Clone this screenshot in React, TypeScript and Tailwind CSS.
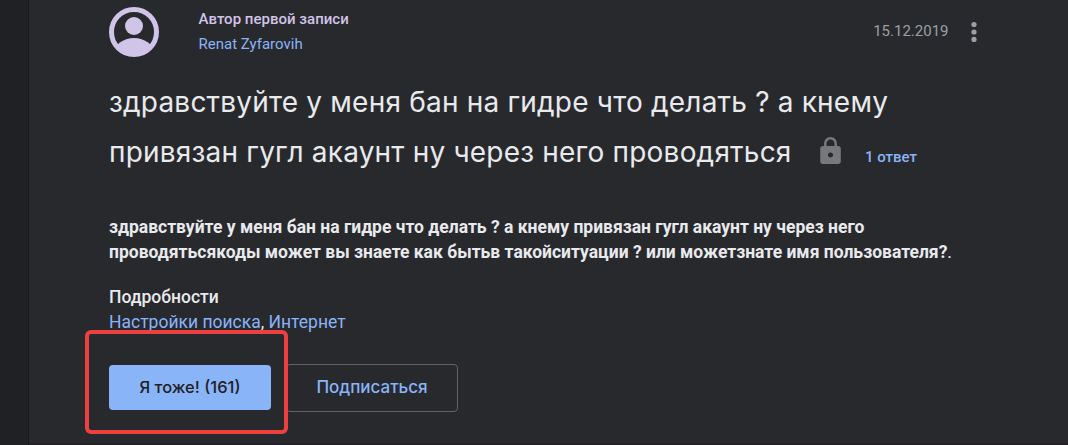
import type { ReactNode } from "react";

function Avatar() {
  return (
    <svg viewBox="0 0 50 50" className="size-[50px] shrink-0" aria-hidden="true">
      <defs>
        <clipPath id="avatar-clip">
          <circle cx="25" cy="25" r="24" />
        </clipPath>
      </defs>
      <circle cx="25" cy="25" r="22.5" fill="none" stroke="#d1c4e9" strokeWidth="5" />
      <circle cx="25" cy="19" r="9" fill="#d1c4e9" />
      <ellipse cx="25" cy="46" rx="20" ry="15" fill="#d1c4e9" clipPath="url(#avatar-clip)" />
    </svg>
  );
}

function MoreIcon() {
  return (
    <svg viewBox="0 0 6 22" className="h-[22px] w-1.5" fill="#9aa0a6" aria-hidden="true">
      <circle cx="3" cy="4.5" r="2.6" />
      <circle cx="3" cy="12" r="2.6" />
      <circle cx="3" cy="19.4" r="2.6" />
    </svg>
  );
}

function LockIcon() {
  return (
    <svg viewBox="4 1 16 21" className="h-[27px] w-[21px]" fill="#77787b" aria-hidden="true">
      <path d="M18 8h-1V6c0-2.76-2.24-5-5-5S7 3.24 7 6v2H6c-1.1 0-2 .9-2 2v10c0 1.1.9 2 2 2h12c1.1 0 2-.9 2-2V10c0-1.1-.9-2-2-2zm-6 9c-1.1 0-2-.9-2-2s.9-2 2-2 2 .9 2 2-.9 2-2 2zm3.1-9H8.9V6c0-1.71 1.39-3.1 3.1-3.1s3.1 1.39 3.1 3.1v2z" />
    </svg>
  );
}

function TopicLink({ children }: { children: ReactNode }) {
  return (
    <a href="#" className="text-[#8ab4f8]">
      {children}
    </a>
  );
}

export default function App() {
  return (
    <div className="flex h-[445px] w-[1068px] overflow-hidden bg-[#28292c] font-['Roboto',sans-serif] text-[#e8eaed]">
      <aside className="w-[29px] shrink-0 border-r border-[#18191b] bg-[#202124]" />

      <main className="relative flex-1 border-b-2 border-[#242227] pl-20">
        <header className="flex h-[57px] pt-[7px]">
          <Avatar />
          <div className="ml-[39.5px] text-[15px] leading-[25px]">
            <div className="w-fit whitespace-nowrap font-medium tracking-[0.02px] text-[#d1c4e9]">
              Автор первой записи
            </div>
            <a href="#" className="block text-[#8ab4f8]">
              Renat Zyfarovih
            </a>
          </div>
          <div className="ml-auto mr-[91px] flex h-12 items-center gap-[22.5px]">
            <time className="text-[15px] text-[#9aa0a6]">15.12.2019</time>
            <button aria-label="Ещё">
              <MoreIcon />
            </button>
          </div>
        </header>

        <h1 className="mt-5 whitespace-nowrap font-['Inter',sans-serif] text-[28px] leading-[50px] tracking-[0.2px]">
          <span className="block">здравствуйте у меня бан на гидре что делать ? а кнему</span>
          <span className="flex">
            <span className="w-[710.5px]">привязан гугл акаунт ну через него проводяться</span>
            <span className="mt-[10px]">
              <LockIcon />
            </span>
            <span className="ml-[24.5px] mt-[5px] font-['Roboto',sans-serif] text-[15px] font-medium tracking-normal text-[#8ab4f8]">
              1 ответ
            </span>
          </span>
        </h1>

        <div className="mt-[33px] whitespace-nowrap text-[17.5px] leading-[25px]">
          <p>
            <b className="block">
              здравствуйте у меня бан на гидре что делать ? а кнему привязан гугл акаунт ну через него
            </b>
            <b>проводятьсякоды может вы знаете как бытьв такойситуации ? или можетзнате имя пользователя?</b>.
          </p>
          <div className="mt-5 font-medium">Подробности</div>
          <div>
            <TopicLink>Настройки поиска</TopicLink>, <TopicLink>Интернет</TopicLink>
          </div>
        </div>

        <div className="mt-[29px] flex items-start font-['Inter',sans-serif] text-[17px] font-medium">
          <button className="mt-px h-[45px] w-[162px] rounded bg-[#8ab4f8] text-[16.5px] text-[#202124]">
            Я тоже! (161)
          </button>
          <button className="ml-[15px] h-12 w-[172px] rounded border border-[#5f6368] text-[#8ab4f8]">
            Подписаться
          </button>
        </div>

        {/* highlight around the vote button */}
        <div className="pointer-events-none absolute left-14 top-[330px] h-[104px] w-[203px] rounded-md border-4 border-[#ed4040]" />
      </main>
    </div>
  );
}
